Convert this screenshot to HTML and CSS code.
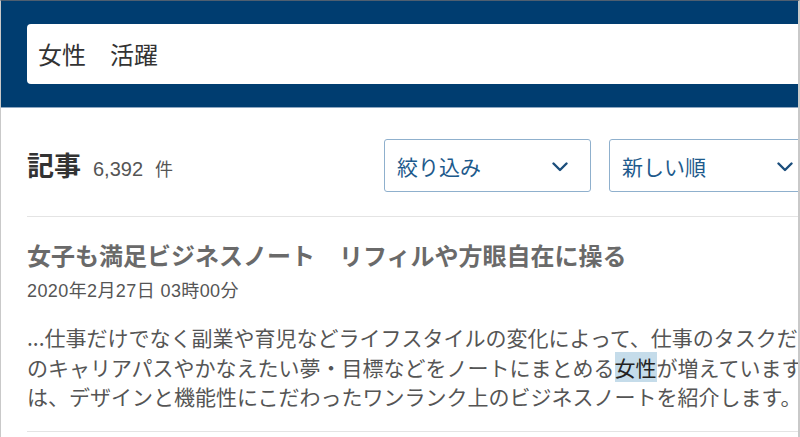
FILE: index.html
```html
<!DOCTYPE html>
<html lang="ja">
<head>
<meta charset="utf-8">
<title>記事検索</title>
<link rel="stylesheet" href="styles.css">
</head>
<body>
<div class="frame">
  <header class="header">
    <div class="search">女性　活躍</div>
  </header>
  <main class="main">
    <div class="toolbar">
      <div class="heading">
        <h1 class="heading-title">記事</h1>
        <span class="count">6,392</span>
        <span class="unit">件</span>
      </div>
      <div class="select select-filter">
        <span class="select-label">絞り込み</span>
        <svg class="chevron" width="16" height="10" viewBox="0 0 16 10"><path d="M1.5 1.5 L8 8 L14.5 1.5" fill="none" stroke="#1b4e7c" stroke-width="2.4" stroke-linecap="round" stroke-linejoin="round"/></svg>
      </div>
      <div class="select select-sort">
        <span class="select-label">新しい順</span>
        <svg class="chevron" width="16" height="10" viewBox="0 0 16 10"><path d="M1.5 1.5 L8 8 L14.5 1.5" fill="none" stroke="#1b4e7c" stroke-width="2.4" stroke-linecap="round" stroke-linejoin="round"/></svg>
      </div>
    </div>
    <article class="article">
      <h2 class="article-title">女子も満足ビジネスノート　リフィルや方眼自在に操る</h2>
      <div class="article-date">2020年2月27日 03時00分</div>
      <p class="article-body">...仕事だけでなく副業や育児などライフスタイルの変化によって、仕事のタスクだけでなく自分<br>のキャリアパスやかなえたい夢・目標などをノートにまとめる<mark class="hl">女性</mark>が増えています。今回<br>は、デザインと機能性にこだわったワンランク上のビジネスノートを紹介します。</p>
    </article>
  </main>
</div>
</body>
</html>
```
FILE: styles.css
```css
* { box-sizing: border-box; }
html, body { margin: 0; padding: 0; background: #fff; }
body {
  font-family: "Noto Sans CJK JP", "Noto Sans", sans-serif;
  color: #333;
}
.frame {
  width: 800px;
  height: 437px;
  overflow: hidden;
  border-top: 1px solid #4f5f70;
  border-left: 1px solid #c9c9c9;
  border-right: 2px solid #c9c9c9;
}
.header {
  background: #003d70;
  height: 107px;
  padding: 23px 0 0 26px;
  border-bottom: 1px solid #8ea7c1;
}
.search {
  height: 60px;
  width: 800px;
  background: #fff;
  border-radius: 4px;
  padding-left: 11px;
  font-size: 24px;
  line-height: 60px;
  color: #333;
  white-space: nowrap;
}
.main {
  padding-left: 26px;
}
.toolbar {
  display: flex;
  align-items: center;
  gap: 18px;
  padding-top: 31px;
  padding-bottom: 24px;
  border-bottom: 1px solid #e4e4e4;
  width: 900px;
}
.heading {
  flex: 0 0 339px;
  display: flex;
  align-items: baseline;
}
.heading-title {
  margin: 0;
  font-size: 27px;
  font-weight: 700;
  color: #333;
  line-height: 1;
}
.count {
  margin-left: 12px;
  font-size: 20px;
  color: #555;
  font-family: "Liberation Sans", "Noto Sans CJK JP", sans-serif;
}
.unit {
  margin-left: 12px;
  font-size: 18px;
  color: #555;
}
.select {
  flex: 0 0 207px;
  height: 53px;
  border: 1px solid #8fb0cd;
  border-radius: 3px;
  display: flex;
  align-items: center;
  justify-content: space-between;
  padding: 0 22px 0 12px;
}
.select-label {
  font-size: 21px;
  color: #1d5a8c;
}
.chevron { display: block; margin-top: 2px; }
.article {
  width: 1000px;
  padding-top: 22px;
  padding-bottom: 19px;
  border-bottom: 1px solid #e4e4e4;
}
.article-title {
  margin: 0;
  font-size: 24px;
  line-height: 32px;
  font-weight: 700;
  color: #6a6a6a;
  white-space: nowrap;
}
.article-date {
  margin-top: 7px;
  font-size: 18px;
  line-height: 26px;
  letter-spacing: 0.4px;
  color: #555;
  font-family: "Liberation Sans", "Noto Sans CJK JP", sans-serif;
}
.article-body {
  margin: 19px 0 0;
  font-size: 21px;
  line-height: 29.5px;
  color: #555;
  white-space: nowrap;
}
.hl {
  background: #c5dcea;
  color: #222;
}
```
